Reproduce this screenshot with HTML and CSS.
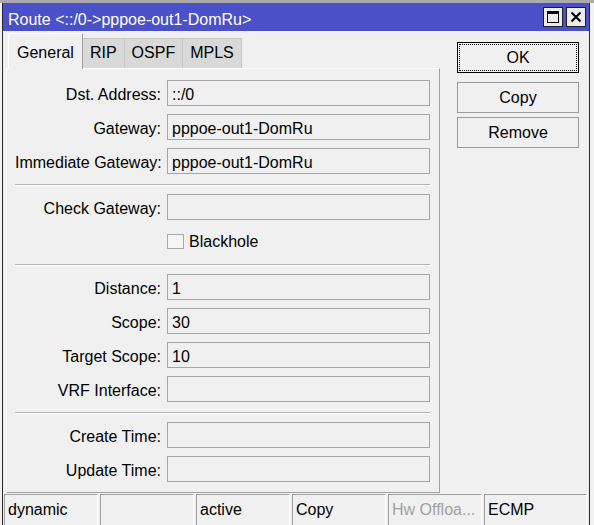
FILE: index.html
```html
<!DOCTYPE html>
<html lang="en">
<head>
    <meta charset="UTF-8">
    <meta name="viewport" content="width=device-width, initial-scale=1.0">
    <title>Route</title>
    <link rel="stylesheet" href="styles.css">
</head>
<body>
    <div class="window">
        <div class="titlebar">
            <span class="title">Route &lt;::/0-&gt;pppoe-out1-DomRu&gt;</span>
            <div class="wm-buttons">
                <span class="wm-btn">
                    <svg width="14" height="14" viewBox="0 0 14 14">
                        <rect x="1.5" y="1.5" width="11" height="11" fill="none" stroke="#000" stroke-width="1"/>
                        <rect x="1" y="1" width="12" height="3" fill="#000"/>
                    </svg>
                </span>
                <span class="wm-btn">
                    <svg width="14" height="14" viewBox="0 0 14 14">
                        <path d="M2.5 2.5 L11.5 11.5 M11.5 2.5 L2.5 11.5" stroke="#000" stroke-width="2" fill="none"/>
                    </svg>
                </span>
            </div>
        </div>

        <div class="main">
            <div class="tabs-area">
                <div class="tabs">
                    <div class="tab active">General</div>
                    <div class="tab">RIP</div>
                    <div class="tab">OSPF</div>
                    <div class="tab">MPLS</div>
                </div>
                <div class="panel">
                    <div class="row"><label>Dst. Address:</label><div class="field">::/0</div></div>
                    <div class="row"><label>Gateway:</label><div class="field">pppoe-out1-DomRu</div></div>
                    <div class="row"><label>Immediate Gateway:</label><div class="field">pppoe-out1-DomRu</div></div>
                    <div class="sep"></div>
                    <div class="row"><label>Check Gateway:</label><div class="field"></div></div>
                    <div class="row check-row"><span class="checkbox"></span><span>Blackhole</span></div>
                    <div class="sep"></div>
                    <div class="row"><label>Distance:</label><div class="field">1</div></div>
                    <div class="row"><label>Scope:</label><div class="field">30</div></div>
                    <div class="row"><label>Target Scope:</label><div class="field">10</div></div>
                    <div class="row"><label>VRF Interface:</label><div class="field"></div></div>
                    <div class="sep"></div>
                    <div class="row"><label>Create Time:</label><div class="field"></div></div>
                    <div class="row"><label>Update Time:</label><div class="field"></div></div>
                </div>
            </div>

            <div class="actions">
                <button class="btn default">OK</button>
                <button class="btn">Copy</button>
                <button class="btn">Remove</button>
            </div>
        </div>

        <div class="statusbar">
            <div class="cell">dynamic</div>
            <div class="cell"></div>
            <div class="cell">active</div>
            <div class="cell">Copy</div>
            <div class="cell disabled">Hw Offloa...</div>
            <div class="cell">ECMP</div>
        </div>
    </div>
</body>
</html>
```

FILE: styles.css
```css
body {
    margin: 0;
    height: 525px;
    overflow: hidden;
    background: linear-gradient(#ababab 0 3px, #f2f2f2 3px);
    font-family: "Liberation Sans", Arial, sans-serif;
    font-size: 16px;
    color: #000;
}
.window {
    margin: 3px 0 0 2px;
    width: 588px;
    box-sizing: border-box;
    border-left: 1px solid #2a2a2a;
    border-right: 1px solid #2a2a2a;
    background: #f0f0f0;
}
.titlebar {
    height: 28px;
    background: #4a50c8;
    display: flex;
    align-items: center;
    justify-content: space-between;
    padding: 0 3px 0 5px;
}
.title {
    color: #fff;
    padding-top: 5px;
}
.wm-buttons {
    display: flex;
    gap: 3px;
}
.wm-btn {
    width: 20px;
    height: 20px;
    box-sizing: border-box;
    border: 1px solid #1e1e1e;
    background: #ececec;
    display: flex;
    align-items: center;
    justify-content: center;
}
.main {
    display: flex;
    height: 462px;
    padding-left: 3px;
}
.tabs {
    display: flex;
    align-items: flex-end;
    height: 37px;
    padding-left: 2px;
}
.tab {
    height: 29px;
    line-height: 28px;
    padding: 0 7px;
    border: 1px solid #c6c6c6;
    border-bottom: none;
    border-left: none;
    background: #d9d9d9;
}
.tab.active {
    height: 35px;
    padding: 5px 8px 0;
    box-sizing: border-box;
    height: 36px;
    margin-bottom: -1px;
    background: #f0f0f0;
    border: 1px solid #fff;
    border-right: 1px solid #a0a0a0;
    border-bottom: none;
    position: relative;
    z-index: 1;
}
.panel {
    width: 434px;
    height: 425px;
    box-sizing: border-box;
    border: 1px solid;
    border-color: #fff #a0a0a0 #a0a0a0 #fff;
    padding: 11px 9px 0 8px;
    display: flex;
    flex-direction: column;
}
.row {
    display: flex;
    height: 26px;
    margin-bottom: 8px;
}
.row label {
    width: 146px;
    text-align: right;
    line-height: 22px;
    padding-top: 4px;
    white-space: nowrap;
}
.field {
    flex: 1;
    margin-left: 6px;
    box-sizing: border-box;
    height: 26px;
    border: 1px solid #a6a6a6;
    padding: 3px 4px 0;
    line-height: 22px;
}
.check-row {
    align-items: center;
    padding-left: 152px;
}
.check-row span:last-child {
    padding-top: 1px;
}
.checkbox {
    width: 17px;
    height: 15px;
    box-sizing: border-box;
    border: 1px solid #a8a8a8;
    background: #f5f5f5;
    margin-right: 5px;
}
.sep {
    border-top: 1px solid #b4b4b4;
    border-bottom: 1px solid #fff;
    margin: 2px 0 8px;
}
.actions {
    margin-left: 17px;
    padding-top: 11px;
    width: 122px;
    display: flex;
    flex-direction: column;
}
.btn {
    height: 31px;
    margin-bottom: 4px;
    border: 1px solid #9a9a9a;
    background: #f0f0f0;
    font-family: inherit;
    font-size: 16px;
    color: #000;
    padding: 0;
}
.btn.default {
    border: 1px solid #000;
    outline: 1px dotted #000;
    outline-offset: -3px;
    margin-bottom: 9px;
}
.statusbar {
    display: grid;
    grid-template-columns: repeat(5, 94px) 1fr;
    column-gap: 2px;
    padding: 1px 2px 0 1px;
    height: 34px;
}
.cell {
    border: 1px solid;
    border-color: #a0a0a0 #fff #fff #a0a0a0;
    padding: 6px 0 0 3px;
    line-height: 18px;
    white-space: nowrap;
    overflow: hidden;
}
.cell.disabled {
    color: #a0a0a0;
}
```
